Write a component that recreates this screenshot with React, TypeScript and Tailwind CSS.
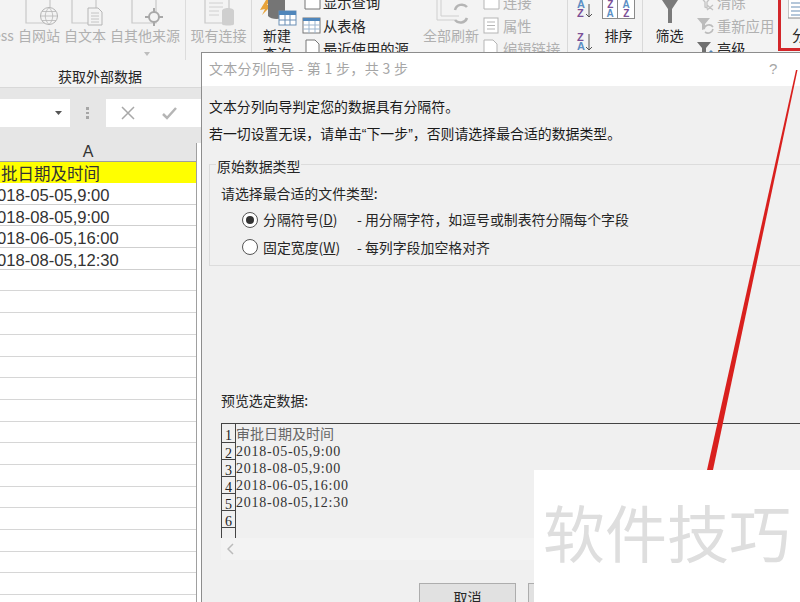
import React from 'react';

const cjk = { fontFamily: '"Noto Sans CJK SC", "Liberation Sans", sans-serif' };

const BigButton = ({ w, label, dark, children }: { w: number; label: string; dark?: boolean; children: React.ReactNode }) => (
    <div className="shrink-0 flex flex-col items-center" style={{ width: w }}>
        <svg width={w} height={26} viewBox={`0 0 ${w} 26`} fill="none" className="shrink-0">{children}</svg>
        <span className={`text-[14px] leading-[18px] whitespace-nowrap ${dark ? 'text-[#262626]' : 'text-[#b0b0b0]'}`}>{label}</span>
    </div>
);

const ListRow = ({ label, dark, children }: { label: string; dark?: boolean; children: React.ReactNode }) => (
    <div className="flex items-center h-[23.5px]">
        <svg width={21} height={20} viewBox="0 0 21 20" fill="none" className="shrink-0">{children}</svg>
        <span className={`text-[14.3px] whitespace-nowrap ${dark ? 'text-[#262626]' : 'text-[#b0b0b0]'}`}>{label}</span>
    </div>
);

const Page = ({ x }: { x: number }) => (
    <path d={`M${x} -3V23H${x + 24}V-3`} stroke="#c9c9c9" strokeWidth="1.2" />
);

const Ribbon = () => (
    <div className="h-[88px] bg-[#f3f3f3] flex overflow-hidden border-b border-[#d8d8d8]">
        <div className="w-[252px] shrink-0 flex flex-col border-r border-[#d9d9d9] h-[64px] relative">
            <div className="flex">
                <div className="w-[18px] shrink-0 overflow-hidden pt-[26px] text-[14px] leading-[18px] text-[#b0b0b0]">
                    <span className="block -ml-[7px]">ess</span>
                </div>
                <BigButton w={42} label="自网站">
                    <Page x={8} />
                    <circle cx="31" cy="16" r="8.5" fill="#f3f3f3" stroke="#b5b5b5" />
                    <path d="M22.5 16h17M31 7.5c-5 5-5 12 0 17M31 7.5c5 5 5 12 0 17M24 11.5h14M24 20.5h14" stroke="#b5b5b5" strokeWidth=".8" />
                </BigButton>
                <div className="w-[4px]" />
                <BigButton w={42} label="自文本">
                    <Page x={8} />
                    <path d="M24 8h10l4 4v13H24z" fill="#f3f3f3" stroke="#b5b5b5" />
                    <path d="M27 13h8M27 16h8M27 19h8M27 22h8" stroke="#c4c4c4" />
                </BigButton>
                <div className="w-[4px]" />
                <BigButton w={70} label="自其他来源">
                    <Page x={22} />
                    <circle cx="44" cy="17" r="5" fill="#f3f3f3" stroke="#a8a8a8" strokeWidth="2" />
                    <path d="M44 8v4M44 22v4M35 17h4M49 17h4" stroke="#a8a8a8" strokeWidth="2" />
                </BigButton>
                <div className="w-[10px]" />
                <BigButton w={57} label="现有连接">
                    <Page x={15} />
                    <path d="M19 3h14M19 7h14M19 11h10M19 15h10" stroke="#d0d0d0" />
                    <path d="M32 11c0-4 12-4 12 0v13c0 2-12 2-12 0z" fill="#cfcfcf" />
                </BigButton>
            </div>
            <span className="absolute left-[58px] top-[67px] text-[14px] leading-[18px] text-[#262626] whitespace-nowrap">获取外部数据</span>
            <svg width="8" height="5" className="absolute left-[143px] top-[52px]"><path d="M1 0h6L4 4z" fill="#bdbdbd" /></svg>
            <div className="absolute left-[185px] top-0 h-[60px] border-l border-[#dcdcdc]" />
        </div>
        <div className="w-[50px] shrink-0 flex flex-col pl-[5px]">
            <svg width="40" height="26" viewBox="0 0 40 26" fill="none">
                <path d="M3 10L9 0h4l-3 5h5L5 15l3-6z" fill="#e8a33a" />
                <path d="M11 -3h17v19c-3 4-14 4-17 0z" fill="#757575" />
                <rect x="22" y="11" width="17" height="14" fill="#fff" stroke="#6b8fb5" />
                <path d="M22 11h17v4H22z" fill="#4f86bb" />
                <path d="M28 15v10M33 15v10M22 20h17" stroke="#6b8fb5" />
            </svg>
            <span className="text-[14px] leading-[18px] text-[#262626] text-center w-[40px]">新建</span>
            <span className="text-[14px] leading-[18px] text-[#262626] text-center w-[40px]">查询</span>
        </div>
        <div className="w-[110px] shrink-0 flex flex-col -mt-[10px]">
            <ListRow label="显示查询" dark><path d="M3 3h15v14H3z" stroke="#777" fill="#fff" /></ListRow>
            <ListRow label="从表格" dark>
                <rect x="1" y="3" width="17" height="15" fill="#fff" stroke="#777" />
                <path d="M1 3h17v3H1z" fill="#4f86bb" />
                <path d="M7 6v12M13 6v12M1 10h17M1 14h17" stroke="#9db6cf" />
            </ListRow>
            <ListRow label="最近使用的源" dark><path d="M4 1h9l4 4v14H4z" stroke="#777" fill="#fff" /></ListRow>
        </div>
        <div className="w-[65px] shrink-0 flex flex-col items-center pl-[13px]">
            <svg width="56" height="26" viewBox="0 0 56 26" fill="none" className="shrink-0">
                <path d="M14 -3v23h18M18 -3v19h18" stroke="#cfcfcf" />
                <path d="M32 10a7 7 0 0 1 12-3M44 18a7 7 0 0 1-12 2" stroke="#b5b5b5" strokeWidth="2.5" />
            </svg>
            <span className="text-[14px] leading-[18px] text-[#b0b0b0] whitespace-nowrap">全部刷新</span>
        </div>
        <div className="w-[91px] shrink-0 flex flex-col -mt-[10px] pl-[5px] border-r border-[#d9d9d9] h-[72px]">
            <ListRow label="连接"><path d="M2 5h15v12H2z" stroke="#b5b5b5" fill="#fff" /></ListRow>
            <ListRow label="属性">
                <rect x="2" y="3" width="14" height="15" stroke="#b5b5b5" fill="#fff" />
                <path d="M5 7h8M5 10.500h8M5 14h8" stroke="#b5b5b5" />
            </ListRow>
            <ListRow label="编辑链接"><path d="M2 1h9l4 4v14H2z" stroke="#b5b5b5" fill="#fff" /></ListRow>
        </div>
        <div className="w-[75px] shrink-0 relative flex border-r border-[#d9d9d9] h-[62px]">
            <div className="flex flex-col pl-[9px]">
                <div className="flex flex-col text-[11px] leading-[9px] font-bold" style={{ fontFamily: '"Liberation Sans", sans-serif' }}>
                    <span className="text-[#5b8fc4]">A</span>
                    <span className="text-[#7b4f96]">Z</span>
                </div>
                <div className="flex flex-col text-[11px] leading-[9px] font-bold mt-[15px]" style={{ fontFamily: '"Liberation Sans", sans-serif' }}>
                    <span className="text-[#7b4f96]">Z</span>
                    <span className="text-[#5b8fc4]">A</span>
                </div>
            </div>
            <svg width="8" height="60" className="mt-[4px]" fill="none" stroke="#555">
                <path d="M4 0v13M1 10l3 3 3-3M4 30v16M1 43l3 3 3-3" />
            </svg>
            <div className="flex flex-col items-center ml-[9px]">
                <div className="w-[33px] h-[20px] border border-[#8a8a8a] bg-white flex text-[10px] leading-[9px] font-bold text-center -mt-[1px]" style={{ fontFamily: '"Liberation Sans", sans-serif' }}>
                    <div className="w-1/2 border-r border-[#8a8a8a] flex flex-col justify-end"><span className="text-[#7b4f96]">Z</span><span className="text-[#5b8fc4]">A</span></div>
                    <div className="w-1/2 flex flex-col justify-end"><span className="text-[#5b8fc4]">A</span><span className="text-[#7b4f96]">Z</span></div>
                </div>
                <span className="text-[14px] leading-[18px] text-[#262626] mt-[7px] whitespace-nowrap">排序</span>
            </div>
        </div>
        <div className="w-[53px] shrink-0 flex flex-col items-center">
            <svg width="34" height="26" viewBox="0 0 34 26" fill="none" className="shrink-0">
                <path d="M7 -3h20l-8 12v14h-4V9z" fill="#7a7a7a" />
            </svg>
            <span className="text-[14px] leading-[18px] text-[#262626] whitespace-nowrap">筛选</span>
        </div>
        <div className="w-[80px] shrink-0 flex flex-col -mt-[10px]">
            <ListRow label="清除"><path d="M3 3l6 7v5l2 1v-6l6-7zM11 13l6 5M17 13l-6 5" stroke="#c2c2c2" strokeWidth="1.3" /></ListRow>
            <ListRow label="重新应用">
                <path d="M1 3h13l-5 6v5l-3 1V9z" fill="#bcbcbc" />
                <path d="M8 14a5 5 0 0 1 9-2M17 14a5 5 0 0 1-8 3" stroke="#bcbcbc" strokeWidth="1.6" />
            </ListRow>
            <ListRow label="高级" dark>
                <path d="M1 3h14l-5 6v7l-4 1V9z" fill="#6f6f6f" />
                <path d="M15 11l3 3-3 3-3-3z" fill="#4f86bb" />
            </ListRow>
        </div>
        <div className="w-[2px] shrink-0" />
        <div className="w-[22px] shrink-0 h-[48px] border-[3px] border-t-0 border-r-0 border-[#d3262a] flex flex-col pl-[7px] overflow-hidden box-content">
            <svg width="20" height="21" viewBox="0 0 20 21" fill="none" className="shrink-0">
                <path d="M0 -2h20v20H0z" fill="#fff" stroke="#8a8a8a" />
                <path d="M3 3h17M3 7h17M3 11h17M3 15h17" stroke="#6b8fb5" />
            </svg>
            <span className="text-[15px] leading-[18px] text-[#262626] mt-[5px] ml-[4px] whitespace-nowrap">分</span>
        </div>
    </div>
);

const FormulaBar = () => (
    <div className="h-[55px] bg-[#e6e6e6] flex items-start pt-[11px]">
        <div className="w-[70px] h-[28px] bg-white flex items-center justify-end pr-[8px]">
            <svg width="7" height="4"><path d="M0 0h7L3.500 4z" fill="#555" /></svg>
        </div>
        <div className="w-[36px] h-[28px] flex flex-col items-center justify-center gap-[2px] pr-[2px]">
            <span className="w-[3px] h-[2.500px] bg-[#a6a6a6]" />
            <span className="w-[3px] h-[2.500px] bg-[#a6a6a6]" />
            <span className="w-[3px] h-[2.500px] bg-[#a6a6a6]" />
        </div>
        <div className="w-[100px] h-[28px] bg-white flex items-center pl-[15px] gap-[27px]">
            <svg width="14" height="14" fill="none" stroke="#a8a8a8" strokeWidth="1.500"><path d="M1 1l12 12M13 1L1 13" /></svg>
            <svg width="15" height="13" fill="none" stroke="#b5b5b5" strokeWidth="2.500"><path d="M1 7l4 4 9-10" /></svg>
        </div>
    </div>
);

const rows = ['018-05-05,9:00', '018-08-05,9:00', '018-06-05,16:00', '018-08-05,12:30'];
const emptyRows = [0, 1, 2, 3, 4, 5, 6, 7, 8, 9, 10, 11, 12, 13, 14];

const Sheet = () => (
    <div className="flex-1 w-[197px] border-r border-[#a0a0a0] overflow-hidden">
        <div className="h-[19px] bg-[#e6e6e6] border-b border-[#9f9f9f] text-center text-[16px] leading-[18px] text-[#333] pr-[20px]" style={{ fontFamily: '"Liberation Sans", sans-serif' }}>A</div>
        <div className="h-[21px] bg-[#ffff00] text-[16.500px] leading-[22px] text-[#333] pl-[1px] whitespace-nowrap">批日期及时间</div>
        {rows.map((r) => (
            <div key={r} className="h-[21.700px] border-b border-[#cfcfcf] overflow-hidden text-[16.600px] leading-[25px] text-[#333] -ml-[3px] whitespace-nowrap" style={{ fontFamily: '"Liberation Sans", sans-serif' }}>{r}</div>
        ))}
        {emptyRows.map((i) => (
            <div key={i} className="h-[21.700px] border-b border-[#d6d6d6]" />
        ))}
    </div>
);

const previewRows = ['审批日期及时间', '2018-05-05,9:00', '2018-08-05,9:00', '2018-06-05,16:00', '2018-08-05,12:30', ''];

const Dialog = () => (
    <div className="absolute left-[201px] top-[52px] w-[640px] h-[560px] bg-[#f0f0f0] border-l border-t border-[#8d8d8d]">
        <div className="h-[33px] bg-white flex items-center pl-[7px] pb-[2px] text-[14px] tracking-[.3px] text-[#a6a6a6] relative whitespace-nowrap">
            文本分列向导 - 第 1 步，共 3 步
            <span className="absolute left-[567px] top-[5px] text-[#a6a6a6] text-[15px]" style={{ fontFamily: '"Liberation Sans", sans-serif' }}>?</span>
        </div>
        <div className="pl-[7px] pt-[10px] text-[13.900px] text-[#1a1a1a] leading-[20px] whitespace-nowrap">文本分列向导判定您的数据具有分隔符。</div>
        <div className="pl-[7px] mt-[7px] h-[20px] text-[13.900px] text-[#1a1a1a] leading-[20px] whitespace-nowrap">
            若一切设置无误，请单击<span style={{ fontFamily: '"Liberation Sans", sans-serif' }}>“</span>下一步<span style={{ fontFamily: '"Liberation Sans", sans-serif' }}>”</span>，否则请选择最合适的数据类型。
        </div>
        <div className="ml-[7px] mt-[21px] h-[102px] border border-[#dcdcdc] relative pt-[19px] pl-[11px] text-[#262626]">
            <span className="absolute left-[6px] -top-[8px] bg-[#f0f0f0] px-[1px] text-[13.900px] leading-[18px] whitespace-nowrap">原始数据类型</span>
            <div className="text-[13.900px] leading-[18px] whitespace-nowrap">请选择最合适的文件类型:</div>
            <div className="flex items-center h-[27.500px] mt-[4px] pl-[21px] text-[13.900px] whitespace-nowrap">
                <span className="w-[16px] h-[16px] rounded-full border border-[#555] bg-white flex items-center justify-center mr-[5px]">
                    <span className="w-[8px] h-[8px] rounded-full bg-[#333]" />
                </span>
                <span className="w-[94px]">分隔符号(<span className="underline">D</span>)</span>
                <span>- 用分隔字符，如逗号或制表符分隔每个字段</span>
            </div>
            <div className="flex items-center h-[27.500px] pl-[21px] text-[13.900px] whitespace-nowrap">
                <span className="w-[16px] h-[16px] rounded-full border border-[#555] bg-white mr-[5px]" />
                <span className="w-[94px]">固定宽度(<span className="underline">W</span>)</span>
                <span>- 每列字段加空格对齐</span>
            </div>
        </div>
        <div className="ml-[19px] mt-[125px] text-[13.900px] leading-[18px] text-[#262626] whitespace-nowrap">预览选定数据:</div>
        <div className="ml-[19px] mt-[14px] h-[115px] border-t border-[#444] border-l flex overflow-hidden">
            <div className="w-[14px] shrink-0 border-r border-[#444]">
                {previewRows.map((_, i) => (
                    <div key={i} className={`${i === 0 ? 'h-[19px] leading-[24px]' : 'h-[17px] leading-[22px]'} border-b border-[#444] text-center text-[14px] text-[#222] overflow-hidden`} style={{ fontFamily: '"Liberation Serif", serif' }}>{i + 1}</div>
                ))}
            </div>
            <div>
                {previewRows.map((r, i) => (
                    <div key={i} className={`whitespace-nowrap ${i === 0 ? 'h-[19px] leading-[19px] text-[14px] text-[#666]' : 'h-[17px] leading-[17px] text-[14px] tracking-[.75px] text-[#333]'}`} style={i === 0 ? undefined : { fontFamily: '"Liberation Serif", serif' }}>{r}</div>
                ))}
            </div>
        </div>
        <div className="ml-[19px] h-[22px] bg-[#f3f3f3] pl-[6px] flex items-center">
            <svg width="8" height="12" fill="none" stroke="#bbb" strokeWidth="1.500"><path d="M6 1L1 6l5 5" /></svg>
        </div>
        <div className="flex mt-[23px] pl-[217px] gap-[12px]">
            <div className="w-[97px] h-[30px] bg-[#e1e1e1] border border-[#adadad] text-center text-[14px] leading-[27px] text-[#262626]">取消</div>
            <div className="w-[97px] h-[30px] bg-[#e1e1e1] border border-[#adadad]" />
        </div>
    </div>
);

const App = () => {
    return (
        <div className="relative w-[800px] h-[602px] overflow-hidden bg-white flex flex-col" style={cjk}>
            <Ribbon />
            <FormulaBar />
            <Sheet />
            <Dialog />
            <svg className="absolute left-0 top-0" width="800" height="602">
                <polygon points="796,70 797.500,70 713,470 707,470" fill="#d9201e" />
            </svg>
            <div className="absolute left-[534px] top-[470px] w-[266px] h-[132px] bg-white pl-[9px] pt-[25px] text-[62px] leading-[72px] text-[#dedede] whitespace-nowrap font-normal">软件技巧</div>
        </div>
    );
};

export default App;
